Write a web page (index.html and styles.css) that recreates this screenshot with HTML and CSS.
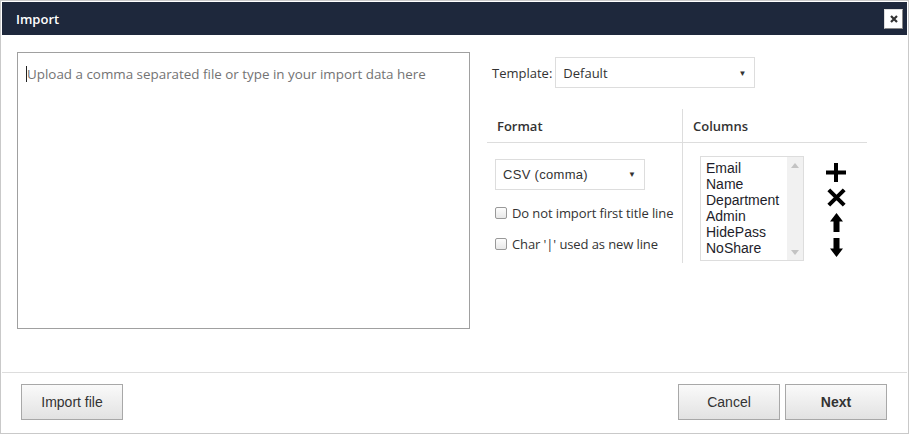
FILE: index.html
```html
<!DOCTYPE html>
<html>
<head>
<meta charset="utf-8">
<link rel="stylesheet" href="styles.css">
</head>
<body>
<div class="dialog">
  <div class="header">
    <span class="title">Import</span>
    <button class="close" aria-label="Close">
      <svg width="8" height="8" viewBox="0 0 8 8"><path d="M1 1L7 7M7 1L1 7" stroke="#333" stroke-width="2.2"/></svg>
    </button>
  </div>
  <div class="body">
    <div class="textarea"><span class="caret"></span><span class="placeholder">Upload a comma separated file or type in your import data here</span></div>
    <div class="panel">
      <div class="template-row">
        <span class="label">Template:</span>
        <div class="select tpl"><span>Default</span><span class="arrow">▼</span></div>
      </div>
      <div class="table">
        <div class="cell head fmt">Format</div>
        <div class="cell head cols">Columns</div>
        <div class="cell fmt body-cell">
          <div class="select csv"><span>CSV (comma)</span><span class="arrow">▼</span></div>
          <label class="check"><span class="box"></span>Do not import first title line</label>
          <label class="check"><span class="box"></span>Char '|' used as new line</label>
        </div>
        <div class="cell cols body-cell colcell">
          <div class="listbox">
            <div class="items">
              <div>Email</div><div>Name</div><div>Department</div><div>Admin</div><div>HidePass</div><div>NoShare</div>
            </div>
            <div class="scroll">
              <svg width="8" height="5" viewBox="0 0 8 5"><path d="M0 5L4 0L8 5Z" fill="#c3c3c3"/></svg>
              <svg width="8" height="5" viewBox="0 0 8 5"><path d="M0 0L4 5L8 0Z" fill="#c3c3c3"/></svg>
            </div>
          </div>
          <div class="tools">
            <svg width="20" height="19" viewBox="0 0 20 19"><path d="M8 0H12V7.5H20V11.5H12V19H8V11.5H0V7.5H8Z" fill="#000"/></svg>
            <svg width="19" height="19" viewBox="0 0 19 19"><path d="M1.8 1.8L17.2 17.2M17.2 1.8L1.8 17.2" stroke="#000" stroke-width="4"/></svg>
            <svg width="13" height="19" viewBox="0 0 13 19"><path d="M6.5 0L13 8.5H9.5V19H3.5V8.5H0Z" fill="#000"/></svg>
            <svg width="13" height="19" viewBox="0 0 13 19"><path d="M6.5 19L13 10.5H9.5V0H3.5V10.5H0Z" fill="#000"/></svg>
          </div>
        </div>
      </div>
    </div>
  </div>
  <div class="footer">
    <button class="btn">Import file</button>
    <div class="spacer"></div>
    <button class="btn">Cancel</button>
    <button class="btn bold">Next</button>
  </div>
</div>
</body>
</html>
```
FILE: styles.css
```css
* { box-sizing: border-box; }
html, body { margin: 0; padding: 0; background: #fff; }
body { font-family: "Open Sans", "Liberation Sans", sans-serif; font-size: 13px; color: #333; }

.dialog {
  width: 909px; height: 434px;
  border: 1px solid #c9c9c9;
  padding: 1px;
  display: flex; flex-direction: column;
}
.header {
  height: 33px;
  background: #1e283c;
  display: flex; align-items: center; justify-content: space-between;
  padding: 0 4px 0 14px;
}
.title { color: #fff; font-weight: 600; font-size: 13px; }
.close {
  width: 19px; height: 20px; padding: 0; margin: 0;
  background: #fff; border: 1px solid #ddd;
  border-right-color: #888; border-bottom-color: #888;
  display: flex; align-items: center; justify-content: center;
}

.body { flex: 1; display: flex; padding: 17px 0 0 15px; }
.textarea {
  width: 453px; height: 277px;
  border: 1px solid #a0a0a0;
  padding: 12px 0 0 8px;
  display: flex; align-items: flex-start;
}
.caret { width: 1px; height: 16px; background: #222; margin-top: 1px; }
.placeholder { color: #737373; line-height: 18px; font-size: 13.4px; }

.panel { margin-left: 17px; display: flex; flex-direction: column; }
.template-row { display: flex; align-items: center; padding: 5px 0 0 5px; }
.label { margin-right: 3px; }
.select {
  height: 31px; border: 1px solid #ddd; background: #fff;
  display: flex; align-items: center; justify-content: space-between;
  padding: 0 8px 0 7px;
}
.arrow { font-size: 8px; color: #333; }
.tpl { width: 200px; }

.table {
  margin-top: 21px;
  display: grid; grid-template-columns: 195px 185px;
  grid-template-rows: 34px 120px;
}
.cell.head { font-weight: 600; display: flex; align-items: center; padding-left: 10px; border-bottom: 1px solid #ddd; }
.cell.cols { border-left: 1px solid #ddd; }
.body-cell.fmt { padding: 16px 0 0 8px; }
.csv { width: 150px; font-family: "Liberation Sans", Arial, sans-serif; letter-spacing: 0.3px; }
.csv .arrow { letter-spacing: 0; }
.check { display: flex; align-items: center; margin-top: 13px; height: 20px; letter-spacing: -0.1px; }
.check + .check { margin-top: 11px; }
.box {
  width: 12px; height: 12px; border: 1px solid #999; border-radius: 2px;
  background: linear-gradient(#fdfdfd, #e8e8e8);
  margin-right: 5px;
}
.colcell { display: flex; padding: 13px 0 0 17px; }
.listbox {
  width: 104px; height: 105px; border: 1px solid #ddd;
  display: flex;
  font-family: "Liberation Sans", Arial, sans-serif; font-size: 14px; color: #1d1d2a;
}
.items { flex: 1; padding: 3px 0 0 5px; line-height: 16px; }
.scroll {
  width: 16px; background: #f1f1f1;
  display: flex; flex-direction: column; justify-content: space-between; align-items: center;
  padding: 6px 0 5px;
}
.tools {
  margin-left: 22px; width: 20px;
  display: flex; flex-direction: column; align-items: center; gap: 6px;
  padding-top: 7px;
}

.footer {
  height: 60px; border-top: 1px solid #ddd;
  display: flex; align-items: flex-start; padding: 11px 20px 0 19px;
}
.spacer { flex: 1; }
.btn {
  width: 102px; height: 36px;
  border: 1px solid #a8a8a8;
  background: linear-gradient(#fafafa, #e2e2e2);
  font-family: "Liberation Sans", Arial, sans-serif; font-size: 14px; color: #333;
  margin: 0; padding: 0;
}
.btn + .btn { margin-left: 5px; }
.btn.bold { font-weight: bold; }
```
